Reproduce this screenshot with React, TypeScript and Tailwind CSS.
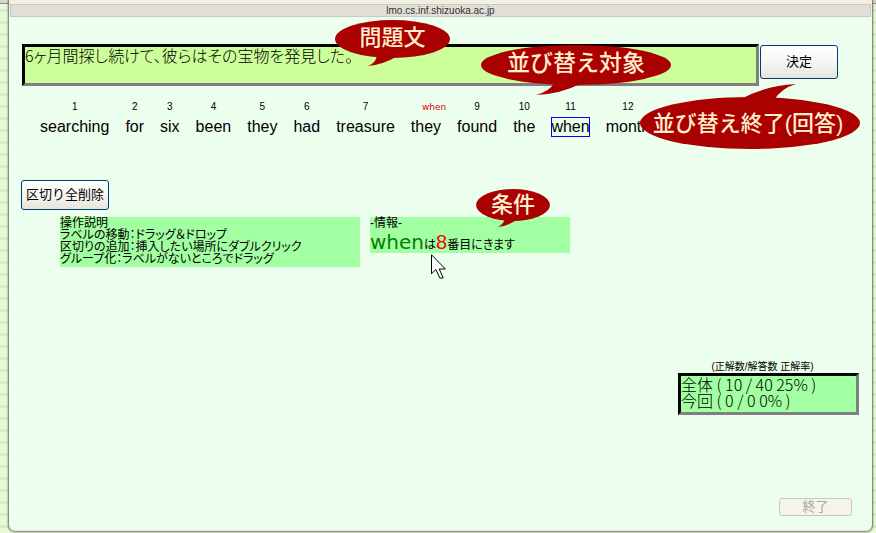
import type { ReactNode } from "react";

const words = [
  { mark: "1", text: "searching" },
  { mark: "2", text: "for" },
  { mark: "3", text: "six" },
  { mark: "4", text: "been" },
  { mark: "5", text: "they" },
  { mark: "6", text: "had" },
  { mark: "7", text: "treasure" },
  { mark: "when", text: "they", hint: true },
  { mark: "9", text: "found" },
  { mark: "10", text: "the" },
  { mark: "11", text: "when", selected: true },
  { mark: "12", text: "month" },
];

const buttonStyle =
  "shrink-0 rounded-[3px] border border-[#003c74] bg-linear-to-b from-white via-[#f6f6f3] to-[#e6e4dc] text-[13px] leading-4";

// A speech balloon; `tail` is drawn in the same coordinates as the ellipse.
function Callout(props: {
  place: string;
  width: number;
  height: number;
  cy: number;
  ry: number;
  tail: string;
  label: string;
  children: ReactNode;
}) {
  const { place, width, height, cy, ry, tail, label, children } = props;
  return (
    <div className={`absolute ${place}`}>
      <svg width={width} height={height} className="block" aria-hidden="true">
        <ellipse cx={width / 2} cy={cy} rx={width / 2} ry={ry} fill="#aa0000" />
        <path d={tail} fill="#aa0000" />
      </svg>
      <span
        className={`absolute inset-x-0 text-center leading-6 font-medium whitespace-nowrap text-[#ffefcf] ${label}`}
      >
        {children}
      </span>
    </div>
  );
}

function Word({ mark, text, hint, selected }: (typeof words)[number]) {
  return (
    <li className="flex flex-col items-center">
      <span
        className={
          hint
            ? "w-7 pl-2.5 font-['DejaVu_Sans'] text-[9px] leading-4 whitespace-nowrap text-[#e00000]"
            : "text-[10px] leading-4"
        }
      >
        {mark}
      </span>
      <span
        className={`mt-0.5 leading-5 ${selected ? "outline outline-[#0000ee] -outline-offset-1" : ""}`}
      >
        {text}
      </span>
    </li>
  );
}

export default function App() {
  return (
    <div className="flex min-h-screen bg-[#e9f8d5] bg-[linear-gradient(to_bottom,#d8d5cc_3px,#8c8a80_3px,#8c8a80_4px,transparent_4px),repeating-linear-gradient(to_bottom,transparent_0px,transparent_9px,#c4edc4_10px,#d6f3cc_12px)] pr-1 pb-0.5 pl-[9px] font-['Liberation_Sans','Noto_Sans_CJK_JP',sans-serif] text-base text-black">
      <div className="relative flex min-w-0 flex-1 flex-col rounded-b-md border-b border-b-[#e6ebe3] bg-[#ecffee] shadow-[0_0_2px_1px_#6b6b60]">
        <header className="bg-[#f3efe3] px-px pt-1">
          <p className="border border-[#c9c8c2] bg-[#e0e0d9] text-center text-[10px] leading-[11px] text-[#303030]">
            lmo.cs.inf.shizuoka.ac.jp
          </p>
        </header>

        <main className="flex flex-1 flex-col">
          <section className="mt-[27px] flex items-start gap-px pr-[34px] pl-[13px]">
            <p className="h-[42px] min-w-0 flex-1 border-3 border-t-black border-r-[#808080] border-b-[#808080] border-l-black bg-[#ccff99] font-['Noto_Sans_CJK_JP',sans-serif] leading-4 font-light [font-feature-settings:'palt']">
              6ヶ月間探し続けて、彼らはその宝物を発見した。
            </p>
            <button type="button" className={`mt-px h-[34px] w-[78px] ${buttonStyle}`}>
              決定
            </button>
          </section>

          <ol className="mt-[13px] flex gap-4 pl-[31px]">
            {words.map((word) => (
              <Word key={word.mark} {...word} />
            ))}
          </ol>

          <div className="mt-[43px] pl-3">
            <button type="button" className={`block h-[30px] w-[88px] ${buttonStyle}`}>
              区切り全削除
            </button>
          </div>

          <section className="mt-[7px] flex items-start gap-2.5 pl-[51px] text-[12px] leading-3 [font-feature-settings:'palt']">
            <div className="w-[300px] bg-[#a2ffa2] pb-0.5">
              <h2>操作説明</h2>
              <p>ラベルの移動：ドラッグ＆ドロップ</p>
              <p>区切りの追加：挿入したい場所にダブルクリック</p>
              <p>グループ化：ラベルがないところでドラッグ</p>
            </div>
            <div className="relative w-[200px] bg-[#a2ffa2]">
              <h2>-情報-</h2>
              <p className="h-6 leading-[26px]">
                <span className="font-['DejaVu_Sans'] text-[20px] text-[#008000]">when</span>は
                <span className="text-[20px] text-[#ff0000]">8</span>番目にきます
              </p>
              <svg
                width="16"
                height="27"
                viewBox="0 0 16 27"
                className="absolute top-[37px] left-[61px]"
                aria-hidden="true"
              >
                <path
                  d="M.5.8v19l4.3-4.3 4 8.5h3.4l-4-9h6.2z"
                  fill="white"
                  stroke="black"
                  strokeWidth="1"
                />
              </svg>
            </div>
          </section>

          <section className="mt-auto mr-[13px] w-[181px] self-end">
            <h2 className="pr-3 text-center text-[10px] leading-3 [font-feature-settings:'palt']">
              (正解数/解答数 正解率)
            </h2>
            <div className="border-3 border-t-black border-r-[#808080] border-b-[#808080] border-l-black bg-[#a2ffa2] pb-1 font-['Noto_Sans_CJK_JP',sans-serif] leading-4 font-light">
              <p>全体 ( 10 / 40 25% )</p>
              <p>今回 ( 0 / 0 0% )</p>
            </div>
          </section>

          <button
            type="button"
            disabled
            className="mt-[83px] mr-5 mb-[14px] h-[18px] w-[73px] self-end rounded-[3px] border border-[#c9c7ba] bg-[#f5f4ea] text-[13px] leading-4 text-[#aca899]"
          >
            終了
          </button>
        </main>

        <Callout
          place="left-[326px] top-5"
          width={115}
          height={46}
          cy={19}
          ry={19}
          tail="M42 35Q41 43 33 46Q47 45 63 36Z"
          label="top-1.5 text-[22px]"
        >
          問題文
        </Callout>
        <Callout
          place="left-[472px] top-[45px]"
          width={190}
          height={50}
          cy={20}
          ry={20}
          tail="M73 38Q69 46 55 50Q80 49 101 38Z"
          label="top-1.5 text-[23px]"
        >
          並び替え対象
        </Callout>
        <Callout
          place="right-3 top-[84px]"
          width={220}
          height={66}
          cy={39}
          ry={26}
          tail="M101 15Q124 2 156 0Q142 4 134 16Z"
          label="top-7 pr-1 text-[22px]"
        >
          並び替え終了(回答)
        </Callout>
        <Callout
          place="left-[467px] top-[189px]"
          width={74}
          height={38}
          cy={16}
          ry={16}
          tail="M29 29Q28 35 22 38Q32 37 42 30Z"
          label="top-1 text-[22px]"
        >
          条件
        </Callout>
      </div>
    </div>
  );
}
